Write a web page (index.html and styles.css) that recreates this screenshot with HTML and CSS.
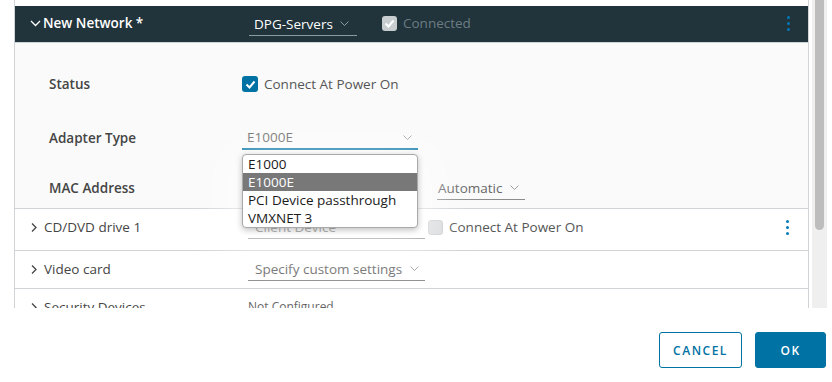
FILE: index.html
```html
<!DOCTYPE html>
<html>
<head>
<meta charset="utf-8">
<link rel="stylesheet" href="styles.css">
</head>
<body>
<div class="viewport">
  <div class="panel">
    <div class="spacer"></div>
    <div class="net-head">
      <div class="head-label">
        <svg class="chev-down" width="11" height="7" viewBox="0 0 11 7"><path d="M1 1l4.5 4.5L10 1" fill="none" stroke="#fff" stroke-width="1.3"/></svg>
        <span>New Network *</span>
      </div>
      <div class="select dark-select">
        <span>DPG-Servers</span>
        <svg class="sel-chev" width="9" height="5" viewBox="0 0 9 5"><path d="M0.5 0.5l4 4 4-4" fill="none" stroke="#8a9aa3" stroke-width="1"/></svg>
      </div>
      <div class="check-wrap">
        <span class="cb cb-disabled-on"><svg width="11" height="9" viewBox="0 0 11 9"><path d="M1.5 4.5l3 3 5-6" fill="none" stroke="#fff" stroke-width="2"/></svg></span>
        <span class="connected">Connected</span>
      </div>
      <div class="kebab"><i></i><i></i><i></i></div>
    </div>
    <div class="net-body">
      <div class="field">
        <div class="flabel">Status</div>
        <div class="check-wrap">
          <span class="cb cb-on"><svg width="11" height="9" viewBox="0 0 11 9"><path d="M1.5 4.5l3 3 5-6" fill="none" stroke="#fff" stroke-width="2"/></svg></span>
          <span class="ctext">Connect At Power On</span>
        </div>
      </div>
      <div class="field field-adapter">
        <div class="flabel">Adapter Type</div>
        <div class="select adapter-select">
          <span>E1000E</span>
          <svg class="sel-chev" width="9" height="5" viewBox="0 0 9 5"><path d="M0.5 0.5l4 4 4-4" fill="none" stroke="#a0a0a0" stroke-width="1"/></svg>
          <ul class="dropdown">
            <li>E1000</li>
            <li class="active">E1000E</li>
            <li>PCI Device passthrough</li>
            <li>VMXNET 3</li>
          </ul>
        </div>
      </div>
      <div class="field field-mac">
        <div class="flabel">MAC Address</div>
        <div class="select mac-select">
          <span>Automatic</span>
          <svg class="sel-chev" width="9" height="5" viewBox="0 0 9 5"><path d="M0.5 0.5l4 4 4-4" fill="none" stroke="#a0a0a0" stroke-width="1"/></svg>
        </div>
      </div>
    </div>
    <div class="row row-cd">
      <div class="rlabel">
        <svg class="chev-right" width="7" height="11" viewBox="0 0 7 11"><path d="M1 1.5l4 4-4 4" fill="none" stroke="#444" stroke-width="1.3"/></svg>
        <span>CD/DVD drive 1</span>
      </div>
      <div class="select row-select"><span>Client Device</span></div>
      <div class="check-wrap cd-check">
        <span class="cb cb-off"></span>
        <span class="ctext">Connect At Power On</span>
      </div>
      <div class="kebab kebab-row"><i></i><i></i><i></i></div>
    </div>
    <div class="row row-video">
      <div class="rlabel">
        <svg class="chev-right" width="7" height="11" viewBox="0 0 7 11"><path d="M1 1.5l4 4-4 4" fill="none" stroke="#444" stroke-width="1.3"/></svg>
        <span>Video card</span>
      </div>
      <div class="select row-select">
        <span>Specify custom settings</span>
        <svg class="sel-chev" width="9" height="5" viewBox="0 0 9 5"><path d="M0.5 0.5l4 4 4-4" fill="none" stroke="#a0a0a0" stroke-width="1"/></svg>
      </div>
    </div>
    <div class="row row-sec">
      <div class="rlabel">
        <svg class="chev-right" width="7" height="11" viewBox="0 0 7 11"><path d="M1 1.5l4 4-4 4" fill="none" stroke="#444" stroke-width="1.3"/></svg>
        <span>Security Devices</span>
      </div>
      <div class="nc">Not Configured</div>
    </div>
  </div>
  <div class="track"><div class="thumb"></div></div>
</div>
<div class="footer">
  <button class="btn btn-outline">CANCEL</button>
  <button class="btn btn-primary">OK</button>
</div>
</body>
</html>
```
FILE: styles.css
```css
html, body {
  margin: 0;
  padding: 0;
  background: #fff;
}
body {
  width: 832px;
  height: 382px;
  overflow: hidden;
  font-family: "Open Sans", "Noto Sans", sans-serif;
  font-size: 13.5px;
  color: #565656;
}
.viewport {
  display: flex;
  height: 308px;
  overflow: hidden;
}
.panel {
  margin-left: 14px;
  width: 795px;
  box-sizing: border-box;
  border-left: 1px solid #d0d4d7;
  border-right: 1px solid #d0d4d7;
  background: #fff;
}
.spacer {
  height: 6px;
}
.net-head {
  height: 37px;
  background: #21333b;
  display: flex;
  align-items: center;
  border-bottom: 1px solid #cdd4d8;
  padding-bottom: 2px;
  box-sizing: border-box;
}
.head-label {
  width: 219px;
  padding-left: 15px;
  display: flex;
  align-items: center;
  color: #fff;
  font-weight: 600;
}
.chev-down {
  margin-right: 2px;
}
.select {
  position: relative;
  display: flex;
  align-items: center;
  box-sizing: border-box;
  height: 24px;
  border-bottom: 1px solid #8c8c8c;
}
.sel-chev {
  margin-left: auto;
}
.dark-select {
  width: 108px;
  padding: 0 8px 0 5px;
  color: #fff;
  margin-top: 2px;
  border-bottom-color: #8a9aa3;
}
.check-wrap {
  display: flex;
  align-items: center;
}
.net-head .check-wrap {
  margin-left: 25px;
}
.cb {
  display: flex;
  align-items: center;
  justify-content: center;
  width: 16px;
  height: 16px;
  border-radius: 3px;
  box-sizing: border-box;
  margin-right: 6px;
}
.cb-disabled-on {
  background: #c8cdd0;
  width: 15px;
  height: 15px;
}
.cb-on {
  background: #0072a3;
}
.cb-off {
  background: #d6d9db;
  border: 1px solid #c8cccf;
  width: 15px;
  height: 15px;
}
.connected {
  color: #6c7c84;
}
.kebab {
  margin-left: auto;
  margin-right: 18px;
  display: flex;
  flex-direction: column;
  gap: 3px;
  align-items: center;
}
.kebab i {
  display: block;
  width: 3px;
  height: 3px;
  border-radius: 50%;
  background: #0079b8;
}
.net-body {
  background: #fafafa;
  padding: 29px 0 8px 0;
  border-bottom: 1px solid #d0d4d7;
}
.field {
  display: flex;
  align-items: center;
  height: 24px;
}
.field-adapter {
  margin-top: 30px;
}
.field-mac {
  margin-top: 26px;
}
.flabel {
  width: 193px;
  padding-left: 34px;
  font-weight: 600;
  color: #454545;
}
.ctext {
  color: #565656;
}
.adapter-select {
  width: 176px;
  padding: 0 6px 0 5px;
  border-bottom: 2px solid #0072a3;
  color: #666;
}
.mac-select {
  margin-left: 195px;
  width: 88px;
  padding: 0 6px 0 1px;
  color: #666;
}
.dropdown {
  position: absolute;
  left: 0;
  top: calc(100% + 6px);
  width: 176px;
  margin: 0;
  padding: 0;
  list-style: none;
  background: #fff;
  border: 1px solid #a9a9a9;
  border-radius: 4px;
  box-sizing: border-box;
  overflow: hidden;
  z-index: 5;
  box-shadow: 0 2px 6px rgba(0,0,0,0.25), 0 10px 40px 20px rgba(255,255,255,0.55);
}
.dropdown li {
  height: 18px;
  line-height: 18px;
  padding-left: 5px;
  color: #1a1a1a;
}
.dropdown li.active {
  background: #787878;
  color: #fff;
}
.row {
  display: flex;
  align-items: flex-start;
  border-bottom: 1px solid #d0d4d7;
}
.row-cd {
  height: 42px;
  padding-top: 6px;
  box-sizing: border-box;
}
.row-video {
  height: 38px;
  padding-top: 6px;
  box-sizing: border-box;
}
.row-sec {
  padding-top: 10px;
  height: 40px;
  box-sizing: border-box;
}
.rlabel {
  width: 217px;
  padding-left: 16px;
  height: 24px;
  display: flex;
  align-items: center;
  color: #454545;
}
.chev-right {
  margin-right: 6px;
}
.row-select {
  width: 177px;
  padding: 0 6px 0 7px;
  color: #666;
}
.cd-check {
  height: 24px;
  margin-left: 3px;
}
.kebab-row {
  height: 24px;
  justify-content: center;
  margin-right: 19px;
}
.nc {
  font-size: 12px;
  color: #666;
  height: 16px;
  line-height: 16px;
  margin-top: 0;
}
.row-sec .rlabel {
  height: 16px;
}
.track {
  margin-left: 3px;
  width: 15px;
  background: #efefef;
}
.thumb {
  margin: 0 3px;
  height: 230px;
  background: #bdbdbd;
  border-radius: 0 0 5px 5px;
}
.footer {
  display: flex;
  justify-content: flex-end;
  gap: 13px;
  padding: 24px 6px 0 0;
}
.btn {
  height: 36px;
  border-radius: 3px;
  font-family: "Open Sans", sans-serif;
  font-size: 12px;
  font-weight: 600;
  letter-spacing: 1.5px;
  box-sizing: border-box;
  cursor: pointer;
}
.btn-outline {
  width: 83px;
  background: #fff;
  border: 1px solid #0072a3;
  color: #0072a3;
}
.btn-primary {
  width: 71px;
  background: #0072a3;
  border: 1px solid #0072a3;
  color: #fff;
}
```
